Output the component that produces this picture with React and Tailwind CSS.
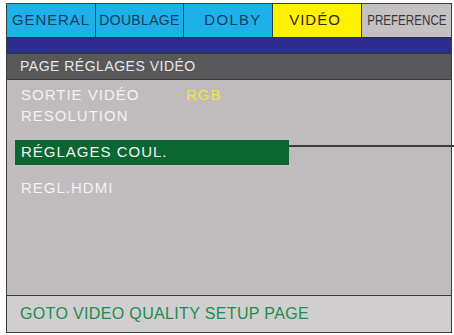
import React from "react";

const tabs = [
  { label: "GENERAL", cls: "w-[89px] bg-[#1db1e9] text-[#1d3b60] text-[15px] tracking-[0.9px]" },
  { label: "DOUBLAGE", cls: "w-[88px] bg-[#1db1e9] text-[#1d3b60] text-[14px] tracking-[0.35px]" },
  { label: "DOLBY", cls: "w-[89px] bg-[#1db1e9] text-[#1d3b60] text-[15px] tracking-[1.3px] pl-[10px]" },
  { label: "VIDÉO", cls: "w-[89px] bg-[#fff200] text-[#2b2a1c] text-[15px] tracking-[1px] pr-[4px]" },
];

const App = () => {
  return (
    <div className="w-[454px] h-[335px] bg-white overflow-hidden" style={{ fontFamily: '"Liberation Sans", Arial, sans-serif' }}>
      <div className="mt-[3px] ml-[6px] w-[446px] border border-[#3c3c3c]">
        {/* Tabs */}
        <div className="flex h-[33px]">
          {tabs.map((t) => (
            <div key={t.label} className={`shrink-0 whitespace-nowrap flex items-center justify-center border-r border-[#23405c] ${t.cls}`}>
              {t.label}
            </div>
          ))}
          <div className="flex-1 min-w-0 whitespace-nowrap flex items-center justify-center bg-[#c4c1c2] text-[#383838] text-[14px]">
            <span className="inline-block scale-x-[0.83]">PREFERENCE</span>
          </div>
        </div>

        <div className="h-[16px] bg-[#2b2c8c] border-t border-[#24304a]" />

        {/* Page header */}
        <div className="h-[26px] bg-[#58585a] border-t border-[#333] flex items-center pl-[13px] text-[14px] tracking-[0.5px] text-[#e6e6e6]">
          PAGE RÉGLAGES VIDÉO
        </div>

        {/* Content */}
        <div className="h-[216px] bg-[#c0bcbd] border-t border-[#3c3c3c] pt-[4px] text-[15px] tracking-[1px] text-[#f2f2f2]">
          <div className="flex h-[21px] leading-[21px] pl-[14px]">
            <span className="w-[165px]">SORTIE VIDÉO</span>
            <span className="text-[#f2e636]">RGB</span>
          </div>
          <div className="h-[21px] leading-[21px] pl-[14px]">RESOLUTION</div>
          <div className="flex items-start mt-[14px] -mr-[6px]">
            <div className="ml-[8px] w-[274px] h-[25px] bg-[#0b6631] flex items-center pl-[6px]">
              RÉGLAGES COUL.
            </div>
            <div className="flex-1 h-[2px] mt-[5px] bg-[#3a3a3a]" />
          </div>
          <div className="mt-[13px] h-[20px] leading-[20px] pl-[14px]">REGL.HDMI</div>
        </div>

        {/* Footer */}
        <div className="h-[37px] bg-[#d0cecf] border-t border-[#3c3c3c] flex items-center pl-[13px] text-[16px] tracking-[0.35px] text-[#1e8c4e]">
          GOTO VIDEO QUALITY SETUP PAGE
        </div>
      </div>
    </div>
  );
};

export default App;
